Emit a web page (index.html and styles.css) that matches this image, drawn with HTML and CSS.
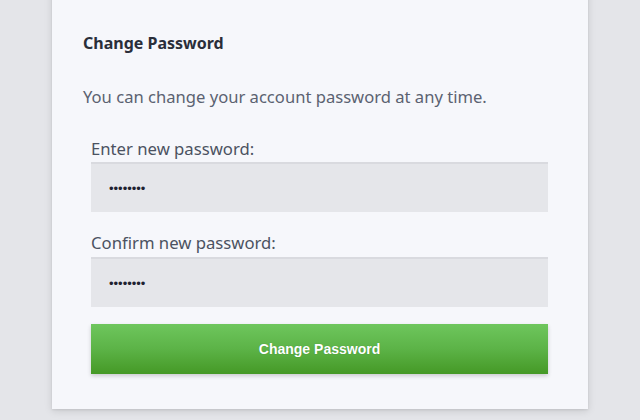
FILE: index.html
```html
<!DOCTYPE html>
<html lang="en">
<head>
<meta charset="utf-8">
<title>Change Password</title>
<link rel="stylesheet" href="styles.css">
</head>
<body>
<div class="page">
  <section class="card">
    <h2 class="title">Change Password</h2>
    <p class="desc">You can change your account password at any time.</p>
    <form class="form">
      <label class="label" for="pw1">Enter new password:</label>
      <input class="field" id="pw1" type="password" value="12345678">
      <label class="label label-second" for="pw2">Confirm new password:</label>
      <input class="field" id="pw2" type="password" value="12345678">
      <button class="btn" type="button">Change Password</button>
    </form>
  </section>
</div>
</body>
</html>
```

FILE: styles.css
```css
html, body {
  margin: 0;
  padding: 0;
  height: 100%;
}
body {
  background: #e4e5e9;
  font-family: "Noto Sans", "Open Sans", sans-serif;
  overflow: hidden;
}
.page {
  padding-left: 52px;
}
.card {
  width: 536px;
  margin-top: -20px;
  padding: 53px 0 35px 0;
  background: #f6f7fb;
  box-shadow: 0 2px 8px rgba(0, 0, 0, 0.12), 0 1px 2px rgba(0, 0, 0, 0.08);
  box-sizing: border-box;
}
.title {
  margin: 0 0 0 31px;
  font-size: 16px;
  line-height: 20px;
  font-weight: 700;
  color: #2a2e3a;
}
.desc {
  margin: 33px 0 0 31px;
  font-size: 16.6px;
  line-height: 22px;
  color: #5b6271;
}
.form {
  display: flex;
  flex-direction: column;
  margin: 31px 40px 0 39px;
}
.label {
  font-size: 16.7px;
  line-height: 20px;
  color: #4b5261;
  margin-bottom: 3px;
}
.label-second {
  margin-top: 21px;
  margin-bottom: 4px;
}
.field {
  height: 50px;
  box-sizing: border-box;
  border: 0;
  border-top: 2px solid #d9dadf;
  background: #e5e6ea;
  padding: 0 18px;
  font-family: "Liberation Sans", Arial, sans-serif;
  font-size: 13px;
  color: #1e2230;
  outline: none;
  letter-spacing: 0;
}
.btn {
  margin-top: 17px;
  height: 50px;
  border: 0;
  background: linear-gradient(to bottom, #6ec65d 0%, #5cb347 50%, #459926 100%);
  color: #ffffff;
  font-family: "Liberation Sans", Arial, sans-serif;
  font-weight: 700;
  font-size: 14px;
  box-shadow: 0 2px 4px rgba(0, 0, 0, 0.18);
  text-shadow: 0 0 1px rgba(0, 60, 0, 0.3);
  cursor: pointer;
}
```
